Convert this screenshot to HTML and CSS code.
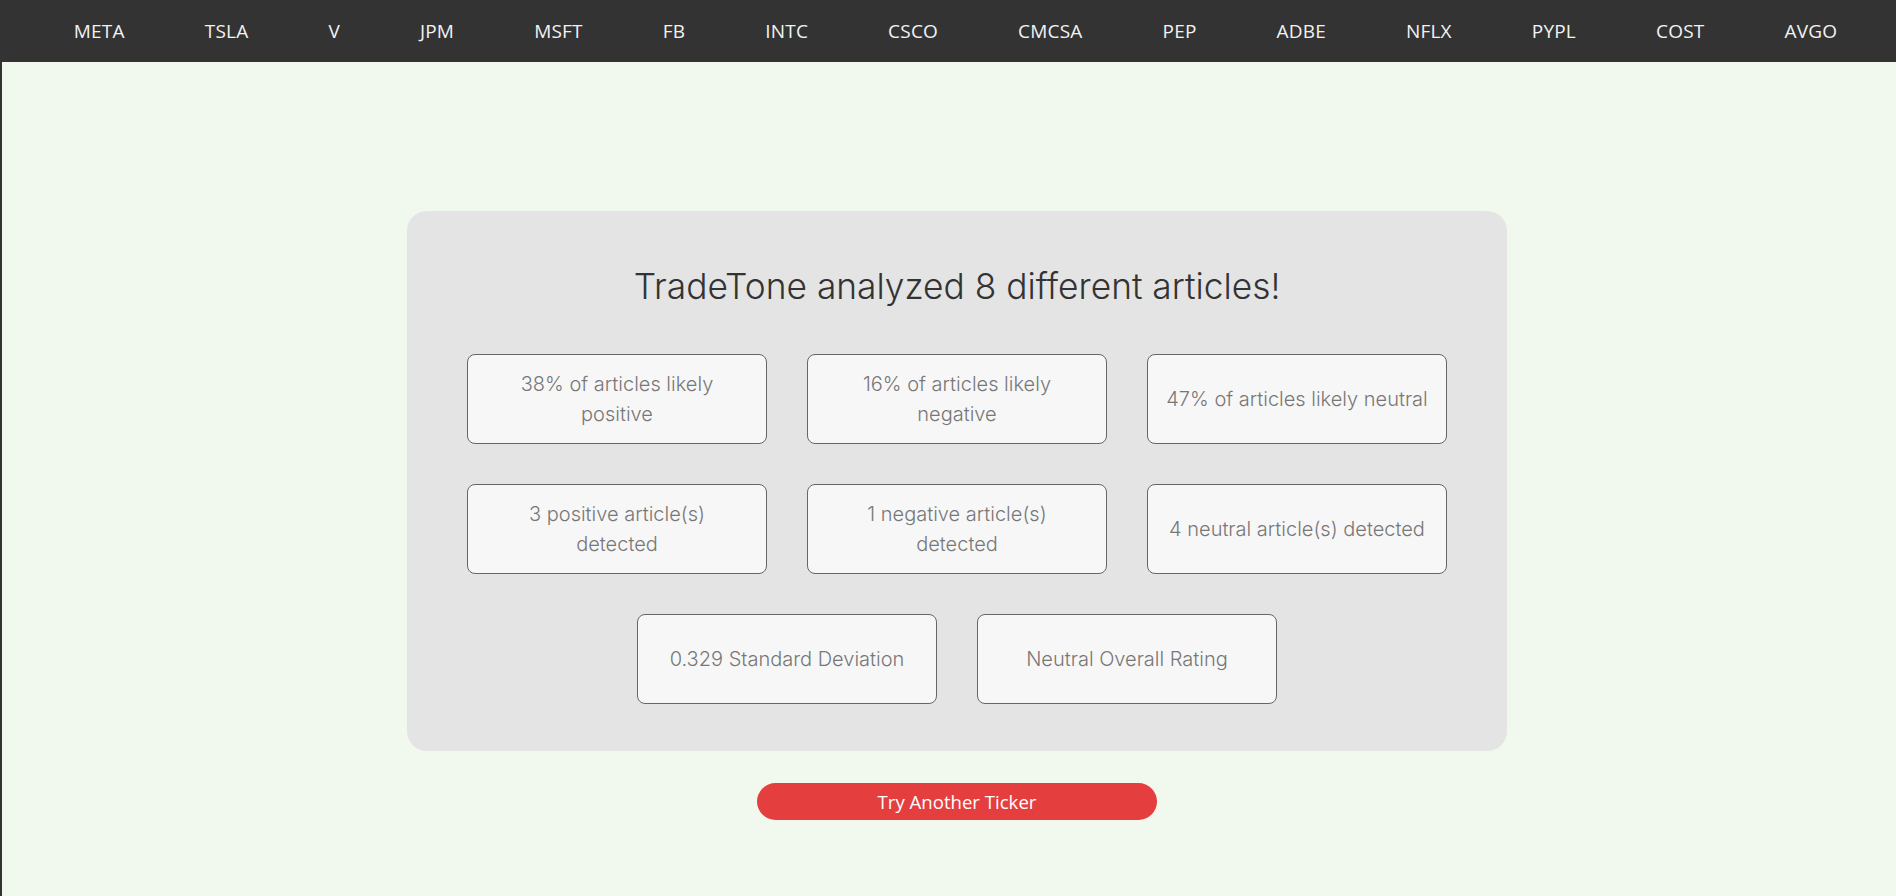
FILE: index.html
```html
<!DOCTYPE html>
<html lang="en">
<head>
<meta charset="utf-8">
<title>TradeTone</title>
<link rel="stylesheet" href="styles.css">
</head>
<body>
<nav class="topnav">
  <a href="#">META</a>
  <a href="#">TSLA</a>
  <a href="#">V</a>
  <a href="#">JPM</a>
  <a href="#">MSFT</a>
  <a href="#">FB</a>
  <a href="#">INTC</a>
  <a href="#">CSCO</a>
  <a href="#">CMCSA</a>
  <a href="#">PEP</a>
  <a href="#">ADBE</a>
  <a href="#">NFLX</a>
  <a href="#">PYPL</a>
  <a href="#">COST</a>
  <a href="#">AVGO</a>
</nav>
<main class="page">
  <section class="results">
    <h1 class="results-title">TradeTone analyzed 8 different articles!</h1>
    <div class="stat-grid">
      <div class="stat">38% of articles likely positive</div>
      <div class="stat">16% of articles likely negative</div>
      <div class="stat">47% of articles likely neutral</div>
      <div class="stat">3 positive article(s) detected</div>
      <div class="stat">1 negative article(s) detected</div>
      <div class="stat">4 neutral article(s) detected</div>
    </div>
    <div class="stat-row">
      <div class="stat">0.329 Standard Deviation</div>
      <div class="stat">Neutral Overall Rating</div>
    </div>
  </section>
  <button class="retry" type="button">Try Another Ticker</button>
</main>
</body>
</html>
```

FILE: styles.css
```css
html, body {
  margin: 0;
  padding: 0;
  height: 100%;
}

body {
  background: #333333;
  overflow: hidden;
}

.topnav {
  height: 62px;
  background: #333333;
  display: flex;
  justify-content: center;
  align-items: center;
  padding-left: 15px;
  font-family: "Open Sans", "Noto Sans", sans-serif;
  font-size: 19px;
  letter-spacing: 0.2px;
}

.topnav a {
  color: #f2f2f2;
  text-decoration: none;
  padding: 0 40px;
  line-height: 24px;
}

.page {
  margin-left: 2px;
  background: #f1f9ef;
  height: calc(100% - 62px);
  padding-left: 16px;
  padding-top: 149px;
  box-sizing: border-box;
  display: flex;
  flex-direction: column;
  align-items: center;
  font-family: "Inter", sans-serif;
}

.results {
  width: 1100px;
  box-sizing: border-box;
  background: #e4e4e4;
  border-radius: 20px;
  padding: 54px 60px 47px;
}

.results-title {
  margin: 0 0 45px;
  font-size: 35.3px;
  line-height: 44px;
  font-weight: 300;
  color: #333333;
  text-align: center;
}

.stat-grid {
  display: grid;
  grid-template-columns: repeat(3, 300px);
  gap: 40px;
}

.stat-row {
  display: flex;
  justify-content: center;
  gap: 40px;
  margin-top: 40px;
}

.stat {
  width: 300px;
  height: 90px;
  box-sizing: border-box;
  padding: 0 18px;
  display: flex;
  align-items: center;
  justify-content: center;
  text-align: center;
  background: #f7f7f7;
  border: 1px solid #666666;
  border-radius: 8px;
  font-size: 20px;
  line-height: 30px;
  font-weight: 300;
  color: #777777;
}

.retry {
  margin-top: 32px;
  width: 400px;
  height: 37px;
  border: none;
  border-radius: 19px;
  background: #e53e3e;
  color: #ffffff;
  font-family: "Open Sans", "Noto Sans", sans-serif;
  font-size: 18.6px;
  padding: 0;
  cursor: pointer;
}
```
